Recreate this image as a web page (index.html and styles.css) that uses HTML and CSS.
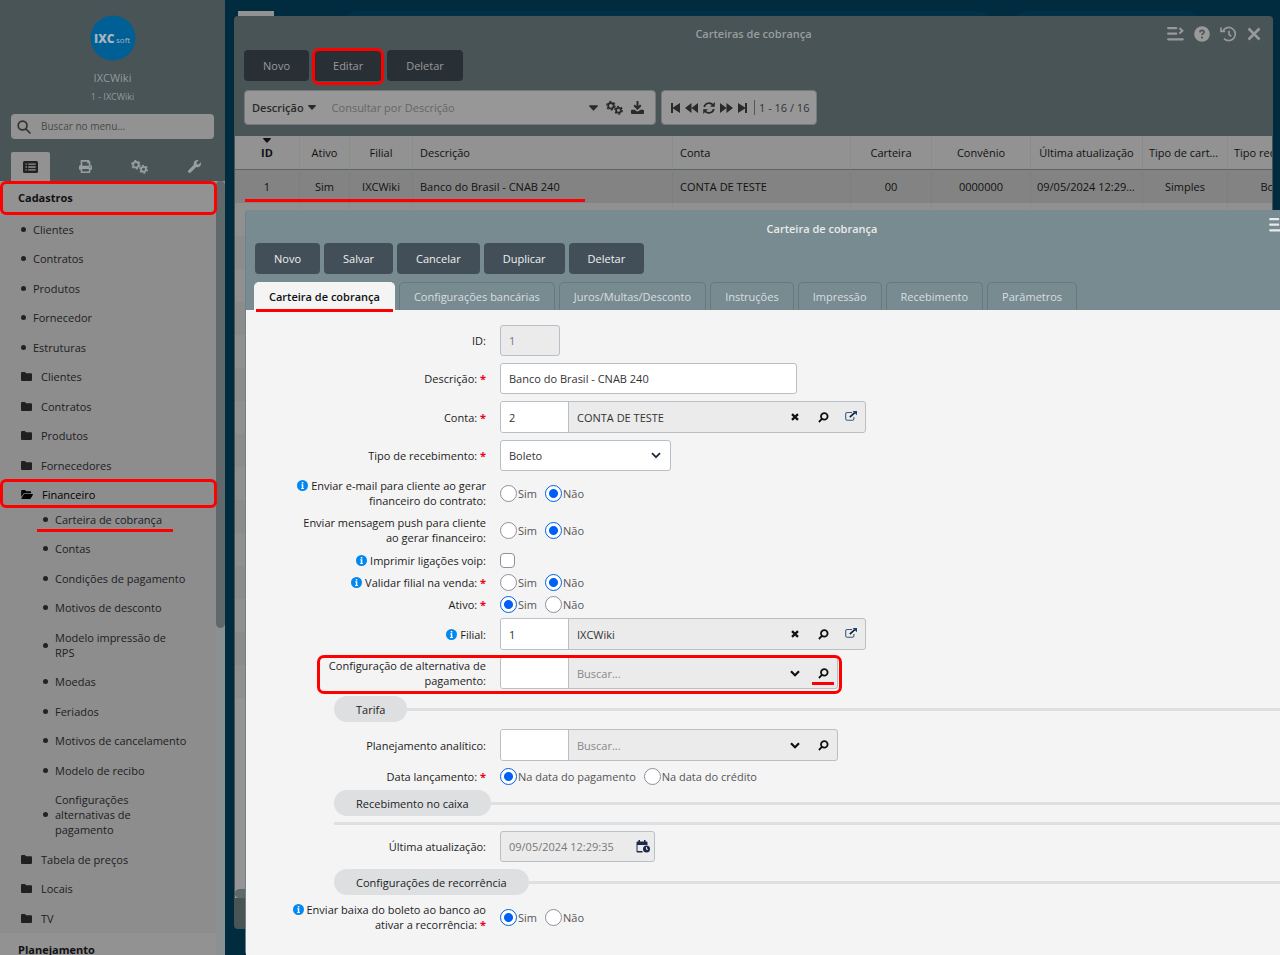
FILE: index.html
```
<!DOCTYPE html>
<html lang="pt-BR">
<head>
<meta charset="utf-8">
<meta name="viewport" content="width=device-width, initial-scale=1">
<title>Carteira de cobrança - IXCWiki</title>
<link rel="stylesheet" href="styles.css">
</head>
<body>
<svg class="sprite" aria-hidden="true">
  <symbol id="i-caret" viewBox="0 0 8 5"><path d="M.6 0h6.8a.6.6 0 0 1 .4 1L4.5 4.6a.7.7 0 0 1-1 0L.2 1A.6.6 0 0 1 .6 0z" fill="currentColor"/></symbol>
  <symbol id="i-cogs" viewBox="0 0 16 13">
    <g fill="none" stroke="currentColor">
      <circle cx="4.6" cy="4.4" r="2.6" stroke-width="1.7"/>
      <circle cx="4.6" cy="4.4" r="3.9" stroke-width="1.3" stroke-dasharray="2.04 2.04"/>
      <circle cx="11.8" cy="8.6" r="2.3" stroke-width="1.7"/>
      <circle cx="11.8" cy="8.6" r="3.5" stroke-width="1.3" stroke-dasharray="1.83 1.83"/>
    </g>
  </symbol>
  <symbol id="i-search" viewBox="0 0 14 14"><path d="M5.6 1.1a4.4 4.4 0 1 0 0 8.8 4.4 4.4 0 0 0 0-8.8zM8.8 8.8l4.2 4.2" fill="none" stroke="currentColor" stroke-width="1.7" stroke-linecap="round"/></symbol>
  <symbol id="i-lens" viewBox="0 0 11 11"><path d="M6.3 1.1a3.3 3.3 0 1 0 0 6.6 3.3 3.3 0 0 0 0-6.6zM3.9 6.9L.9 10" fill="none" stroke="currentColor" stroke-width="1.8"/></symbol>
  <symbol id="i-times" viewBox="0 0 8 8"><path d="M1 1.2l6 5.6M7 1.2L1 6.8" fill="none" stroke="currentColor" stroke-width="2.3"/></symbol>
  <symbol id="i-external" viewBox="0 0 12 10"><path d="M7 1.5H2.3q-1.6 0-1.6 1.6v4.6q0 1.6 1.6 1.6h5q1.6 0 1.6-1.6V6" fill="none" stroke="#3c5a80" stroke-width="1.1"/><path d="M4.8 6.2l5-4.6" stroke="#111c2c" stroke-width="1.6"/><path d="M7.6 0H12v4.2z" fill="#14427c"/></symbol>
  <symbol id="i-chevron" viewBox="0 0 10 7"><path d="M1 1.2l4 4 4-4" fill="none" stroke="currentColor" stroke-width="2.2"/></symbol>
  <symbol id="i-folder" viewBox="0 0 11 9"><path d="M1 0h2.9l1.2 1.3H10a1 1 0 0 1 1 1V8a1 1 0 0 1-1 1H1a1 1 0 0 1-1-1V1a1 1 0 0 1 1-1z" fill="currentColor"/></symbol>
  <symbol id="i-folder-open" viewBox="0 0 12 9"><path d="M.2 7V1a1 1 0 0 1 1-1H4l1.2 1.3h3.9a1 1 0 0 1 1 1v.9H3.7a1.7 1.7 0 0 0-1.5.8zM3.6 4H11.500a.5.5 0 0 1 .4.8L9.700 8.500a1 1 0 0 1-.9.5H.9a.5.5 0 0 1-.4-.8l2.200-3.700a1 1 0 0 1 .9-.5z" fill="currentColor"/></symbol>
  <symbol id="i-info" viewBox="0 0 11 11"><circle cx="5.500" cy="5.500" r="5.500" fill="#0088f0"/><path d="M4.800 1.900h1.500v1.500H4.800zM4.300 4.300h2v3.600h.6v1H4.200v-1h.6V5.300h-.5z" fill="#fff"/></symbol>
  <symbol id="i-menu" viewBox="0 0 17 14"><path d="M1.200 1.200h8M1.200 6.700h8M1.200 12.300h14.600" stroke="currentColor" stroke-width="2.200" stroke-linecap="round"/><path d="M12.400 1l3 2.800-3 2.800" fill="none" stroke="currentColor" stroke-width="2"/></symbol>
</svg>

<div class="desktop">
  <aside class="sidebar">
    <header class="profile">
      <svg class="logo" viewBox="0 0 46 46" role="img" aria-label="IXCsoft">
        <circle cx="23" cy="23" r="22.500" fill="#005f94"/>
        <text x="4" y="28" class="logo-main">IXC</text>
        <text x="26" y="28" class="logo-sub">soft</text>
      </svg>
      <strong class="profile-name">IXCWiki</strong>
      <span class="profile-branch">1 - IXCWiki</span>
      <label class="menu-search">
        <svg width="14" height="14"><use href="#i-search"/></svg>
        <input type="search" placeholder="Buscar no menu..." aria-label="Buscar no menu">
      </label>
      <div class="side-tabs">
        <button class="side-tab active" aria-label="Menu"><svg width="15" height="12" viewBox="0 0 15 12"><rect width="15" height="12" rx="1.500" fill="#222"/><path d="M2.500 3.200h1.300M2.500 6h1.300M2.500 8.800h1.300M5.200 3.200h7.500M5.200 6h7.500M5.200 8.800h7.500" stroke="#929292" stroke-width="1.300"/></svg></button>
        <button class="side-tab" aria-label="Imprimir"><svg width="13" height="13" viewBox="0 0 512 512"><path fill="currentColor" d="M448 192V77.250c0-8.490-3.370-16.620-9.370-22.630L393.370 9.370c-6-6-14.140-9.370-22.630-9.370H96C78.330 0 64 14.330 64 32v160c-35.350 0-64 28.650-64 64v112c0 8.840 7.160 16 16 16h48v96c0 17.670 14.330 32 32 32h320c17.670 0 32-14.330 32-32v-96h48c8.840 0 16-7.160 16-16V256c0-35.350-28.650-64-64-64zm-64 256H128v-96h256v96zm0-224H128V64h192v48c0 8.840 7.160 16 16 16h48v96zm48 72c-13.250 0-24-10.750-24-24 0-13.260 10.750-24 24-24s24 10.740 24 24c0 13.250-10.750 24-24 24z"/></svg></button>
        <button class="side-tab" aria-label="Configurações"><svg width="17" height="14"><use href="#i-cogs"/></svg></button>
        <button class="side-tab" aria-label="Ferramentas"><svg width="13" height="13" viewBox="0 0 512 512"><path fill="currentColor" d="M507.730 109.100c-2.240-9.030-13.540-12.090-20.120-5.510l-74.360 74.360-67.880-11.310-11.310-67.880 74.360-74.360c6.620-6.620 3.430-17.900-5.660-20.160-47.380-11.740-99.550.91-136.580 37.930-39.640 39.640-50.550 97.100-34.050 147.200L18.740 402.760c-24.990 24.990-24.990 65.510 0 90.500 24.990 24.990 65.510 24.990 90.500 0l213.210-213.210c50.120 16.710 107.470 5.680 147.370-34.220 37.070-37.070 49.700-89.320 37.910-136.730z"/></svg></button>
      </div>
    </header>
    <div class="menu-body">
      <nav class="menu">
        <h2 class="menu-heading marked">Cadastros</h2>
        <ul class="menu-list">
          <li><a href="#" class="dot">Clientes</a></li>
          <li><a href="#" class="dot">Contratos</a></li>
          <li><a href="#" class="dot">Produtos</a></li>
          <li><a href="#" class="dot">Fornecedor</a></li>
          <li><a href="#" class="dot">Estruturas</a></li>
          <li><a href="#"><svg width="11" height="9"><use href="#i-folder"/></svg>Clientes</a></li>
          <li><a href="#"><svg width="11" height="9"><use href="#i-folder"/></svg>Contratos</a></li>
          <li><a href="#"><svg width="11" height="9"><use href="#i-folder"/></svg>Produtos</a></li>
          <li><a href="#"><svg width="11" height="9"><use href="#i-folder"/></svg>Fornecedores</a></li>
          <li><a href="#" class="open marked"><svg width="12" height="9"><use href="#i-folder-open"/></svg>Financeiro</a>
            <ul class="submenu">
              <li><a href="#" class="dot underlined">Carteira de cobrança</a></li>
              <li><a href="#" class="dot">Contas</a></li>
              <li><a href="#" class="dot">Condições de pagamento</a></li>
              <li><a href="#" class="dot">Motivos de desconto</a></li>
              <li><a href="#" class="dot wrap">Modelo impressão de RPS</a></li>
              <li><a href="#" class="dot">Moedas</a></li>
              <li><a href="#" class="dot">Feriados</a></li>
              <li><a href="#" class="dot">Motivos de cancelamento</a></li>
              <li><a href="#" class="dot">Modelo de recibo</a></li>
              <li><a href="#" class="dot narrow">Configurações alternativas de pagamento</a></li>
            </ul>
          </li>
          <li><a href="#"><svg width="11" height="9"><use href="#i-folder"/></svg>Tabela de preços</a></li>
          <li><a href="#"><svg width="11" height="9"><use href="#i-folder"/></svg>Locais</a></li>
          <li><a href="#"><svg width="11" height="9"><use href="#i-folder"/></svg>TV</a></li>
        </ul>
        <h2 class="menu-heading">Planejamento</h2>
      </nav>
      <div class="scroll-track"><div class="scroll-thumb"></div></div>
    </div>
  </aside>

  <main class="workspace">
    <div class="taskbar"><span class="task-logo"></span><span class="task-wide"></span><span class="task-short"></span></div>

    <section class="window list-window" aria-label="Carteiras de cobrança">
      <header class="window-head">
        <h1 class="window-title">Carteiras de cobrança</h1>
        <div class="window-actions">
          <button aria-label="Menu"><svg width="17" height="14"><use href="#i-menu"/></svg></button>
          <button aria-label="Ajuda"><svg width="16" height="16" viewBox="0 0 16 16"><circle cx="8" cy="8" r="7.800" fill="currentColor"/><path d="M5.900 6.300q.2-1.900 2.100-1.900t2.100 1.700q0 1-1.200 1.600-.9.500-.9 1.400" fill="none" stroke="#485456" stroke-width="1.700"/><circle cx="8" cy="11.600" r="1.100" fill="#485456"/></svg></button>
          <button aria-label="Histórico"><svg width="17" height="16" viewBox="0 0 17 16"><path d="M3.200 4.400A6.600 6.600 0 1 1 4 12.700M1 1.400v4h4.200M9 4.700v3.700l2.300 2" fill="none" stroke="currentColor" stroke-width="1.700"/></svg></button>
          <button aria-label="Fechar"><svg width="14" height="14" viewBox="0 0 14 14"><path d="M1.500 1.500l11 11M12.500 1.500l-11 11" stroke="currentColor" stroke-width="2.600"/></svg></button>
        </div>
      </header>
      <div class="toolbar">
        <button class="btn">Novo</button>
        <button class="btn marked">Editar</button>
        <button class="btn">Deletar</button>
      </div>
      <div class="filters">
        <div class="query">
          <button class="query-field">Descrição <svg width="8" height="5"><use href="#i-caret"/></svg></button>
          <input type="text" placeholder="Consultar por Descrição" aria-label="Consultar por Descrição">
          <button aria-label="Opções"><svg width="9" height="6"><use href="#i-caret"/></svg></button>
          <button aria-label="Filtros"><svg width="17" height="14"><use href="#i-cogs"/></svg></button>
          <button aria-label="Exportar"><svg width="13" height="13" viewBox="0 0 13 13"><path d="M6.500 0v6.500M3.200 4.200l3.300 3.300 3.300-3.300" fill="none" stroke="currentColor" stroke-width="2"/><path d="M1 8.700h2.800q1.200 1.700 2.700 1.700t2.700-1.700H12a1 1 0 0 1 1 1V12a1 1 0 0 1-1 1H1a1 1 0 0 1-1-1V9.700a1 1 0 0 1 1-1z" fill="currentColor"/></svg></button>
        </div>
        <div class="pager">
          <button aria-label="Primeira"><svg width="9" height="10" viewBox="0 0 9 10"><path d="M0 0h2v4.500L9 0v10L2 5.500V10H0z" fill="currentColor"/></svg></button>
          <button aria-label="Anterior"><svg width="13" height="10" viewBox="0 0 13 10"><path d="M0 5l6.500-5v10zM6.500 5L13 0v10z" fill="currentColor"/></svg></button>
          <button aria-label="Atualizar"><svg width="12" height="12" viewBox="0 0 12 12"><path d="M1.200 5A5 5 0 0 1 10 3M10.800 7A5 5 0 0 1 2 9" fill="none" stroke="currentColor" stroke-width="1.700"/><path d="M11.800 0v4.700H7.100zM.2 12V7.300h4.700z" fill="currentColor"/></svg></button>
          <button aria-label="Próxima"><svg width="13" height="10" viewBox="0 0 13 10"><path d="M13 5L6.500 0v10zM6.500 5L0 0v10z" fill="currentColor"/></svg></button>
          <button aria-label="Última"><svg width="9" height="10" viewBox="0 0 9 10"><path d="M9 0H7v4.500L0 0v10l7-4.500V10h2z" fill="currentColor"/></svg></button>
          <span class="pager-count">1 - 16 / 16</span>
        </div>
      </div>
      <div class="grid-area">
        <table class="grid">
          <colgroup><col class="c-id"><col class="c-ativo"><col class="c-filial"><col class="c-desc"><col class="c-conta"><col class="c-cart"><col class="c-conv"><col class="c-data"><col class="c-tipo"><col class="c-rec"></colgroup>
          <thead><tr><th class="sorted"><svg width="8" height="5"><use href="#i-caret"/></svg>ID</th><th>Ativo</th><th>Filial</th><th class="left">Descrição</th><th class="left">Conta</th><th>Carteira</th><th>Convênio</th><th>Última atualização</th><th>Tipo de carteira</th><th>Tipo recebimento</th></tr></thead>
          <tbody>
            <tr class="selected"><td>1</td><td>Sim</td><td>IXCWiki</td><td class="left">Banco do Brasil - CNAB 240</td><td class="left">CONTA DE TESTE</td><td>00</td><td>0000000</td><td>09/05/2024 12:29:35</td><td>Simples</td><td>Boleto</td></tr>
            <tr><td></td><td></td><td></td><td></td><td></td><td></td><td></td><td></td><td></td><td></td></tr>
            <tr><td></td><td></td><td></td><td></td><td></td><td></td><td></td><td></td><td></td><td></td></tr>
            <tr><td></td><td></td><td></td><td></td><td></td><td></td><td></td><td></td><td></td><td></td></tr>
            <tr><td></td><td></td><td></td><td></td><td></td><td></td><td></td><td></td><td></td><td></td></tr>
            <tr><td></td><td></td><td></td><td></td><td></td><td></td><td></td><td></td><td></td><td></td></tr>
            <tr><td></td><td></td><td></td><td></td><td></td><td></td><td></td><td></td><td></td><td></td></tr>
            <tr><td></td><td></td><td></td><td></td><td></td><td></td><td></td><td></td><td></td><td></td></tr>
            <tr><td></td><td></td><td></td><td></td><td></td><td></td><td></td><td></td><td></td><td></td></tr>
            <tr><td></td><td></td><td></td><td></td><td></td><td></td><td></td><td></td><td></td><td></td></tr>
            <tr><td></td><td></td><td></td><td></td><td></td><td></td><td></td><td></td><td></td><td></td></tr>
            <tr><td></td><td></td><td></td><td></td><td></td><td></td><td></td><td></td><td></td><td></td></tr>
            <tr><td></td><td></td><td></td><td></td><td></td><td></td><td></td><td></td><td></td><td></td></tr>
            <tr><td></td><td></td><td></td><td></td><td></td><td></td><td></td><td></td><td></td><td></td></tr>
            <tr><td></td><td></td><td></td><td></td><td></td><td></td><td></td><td></td><td></td><td></td></tr>
            <tr><td></td><td></td><td></td><td></td><td></td><td></td><td></td><td></td><td></td><td></td></tr>
          </tbody>
        </table>
        <span class="row-underline"></span>
        <div class="grid-scroll"></div>
      </div>
    </section>

    <section class="window form-window" aria-label="Carteira de cobrança">
      <header class="window-head">
        <h1 class="window-title">Carteira de cobrança</h1>
        <div class="window-actions">
          <button aria-label="Menu"><svg width="17" height="14"><use href="#i-menu"/></svg></button>
        </div>
      </header>
      <div class="toolbar">
        <button class="btn">Novo</button>
        <button class="btn">Salvar</button>
        <button class="btn">Cancelar</button>
        <button class="btn">Duplicar</button>
        <button class="btn">Deletar</button>
      </div>
      <div class="tabs" role="tablist">
        <button class="tab active" role="tab" aria-selected="true">Carteira de cobrança</button>
        <button class="tab" role="tab">Configurações bancárias</button>
        <button class="tab" role="tab">Juros/Multas/Desconto</button>
        <button class="tab" role="tab">Instruções</button>
        <button class="tab" role="tab">Impressão</button>
        <button class="tab" role="tab">Recebimento</button>
        <button class="tab" role="tab">Parâmetros</button>
      </div>
      <form class="form">
        <div class="row">
          <label for="id">ID:</label>
          <input class="text text-id" id="id" value="1" disabled>
        </div>
        <div class="row">
          <label for="descricao">Descrição: <b>*</b></label>
          <input class="text text-desc" id="descricao" value="Banco do Brasil - CNAB 240">
        </div>
        <div class="row">
          <label for="conta">Conta: <b>*</b></label>
          <div class="lookup">
            <input class="code" id="conta" value="2">
            <input class="name" value="CONTA DE TESTE" aria-label="Nome da conta" readonly>
            <button type="button" aria-label="Limpar"><svg width="8" height="8"><use href="#i-times"/></svg></button>
            <button type="button" aria-label="Buscar"><svg width="11" height="11"><use href="#i-lens"/></svg></button>
            <button type="button" class="up" aria-label="Abrir"><svg width="12" height="10"><use href="#i-external"/></svg></button>
          </div>
        </div>
        <div class="row">
          <label for="tipo">Tipo de recebimento: <b>*</b></label>
          <div class="select"><select id="tipo"><option>Boleto</option></select><svg width="10" height="7" viewBox="0 0 10 7"><path d="M1 1.200l4 4 4-4" fill="none" stroke="#222c3c" stroke-width="1.800"/></svg></div>
        </div>
        <div class="row">
          <span class="label" id="l-email"><svg class="info" width="11" height="11"><use href="#i-info"/></svg>Enviar e-mail para cliente ao gerar financeiro do contrato:</span>
          <div class="radios" role="radiogroup" aria-labelledby="l-email"><label><input type="radio" name="email">Sim</label><label><input type="radio" name="email" checked>Não</label></div>
        </div>
        <div class="row">
          <span class="label" id="l-push">Enviar mensagem push para cliente ao gerar financeiro:</span>
          <div class="radios" role="radiogroup" aria-labelledby="l-push"><label><input type="radio" name="push">Sim</label><label><input type="radio" name="push" checked>Não</label></div>
        </div>
        <div class="row compact">
          <label for="voip"><svg class="info" width="11" height="11"><use href="#i-info"/></svg>Imprimir ligações voip:</label>
          <input type="checkbox" id="voip">
        </div>
        <div class="row compact">
          <span class="label" id="l-validar"><svg class="info" width="11" height="11"><use href="#i-info"/></svg>Validar filial na venda: <b>*</b></span>
          <div class="radios" role="radiogroup" aria-labelledby="l-validar"><label><input type="radio" name="validar">Sim</label><label><input type="radio" name="validar" checked>Não</label></div>
        </div>
        <div class="row compact">
          <span class="label" id="l-ativo">Ativo: <b>*</b></span>
          <div class="radios" role="radiogroup" aria-labelledby="l-ativo"><label><input type="radio" name="ativo" checked>Sim</label><label><input type="radio" name="ativo">Não</label></div>
        </div>
        <div class="row">
          <label for="filial"><svg class="info" width="11" height="11"><use href="#i-info"/></svg>Filial:</label>
          <div class="lookup">
            <input class="code" id="filial" value="1">
            <input class="name" value="IXCWiki" aria-label="Nome da filial" readonly>
            <button type="button" aria-label="Limpar"><svg width="8" height="8"><use href="#i-times"/></svg></button>
            <button type="button" aria-label="Buscar"><svg width="11" height="11"><use href="#i-lens"/></svg></button>
            <button type="button" class="up" aria-label="Abrir"><svg width="12" height="10"><use href="#i-external"/></svg></button>
          </div>
        </div>
        <div class="row marked-row">
          <label for="config">Configuração de alternativa de pagamento:</label>
          <div class="lookup">
            <input class="code" id="config">
            <input class="name" placeholder="Buscar..." aria-label="Buscar configuração">
            <button type="button" aria-label="Expandir"><svg width="10" height="7"><use href="#i-chevron"/></svg></button>
            <button type="button" class="underlined" aria-label="Buscar"><svg width="11" height="11"><use href="#i-lens"/></svg></button>
          </div>
        </div>
        <h2 class="divider"><span>Tarifa</span></h2>
        <div class="row">
          <label for="plan">Planejamento analítico:</label>
          <div class="lookup">
            <input class="code" id="plan">
            <input class="name" placeholder="Buscar..." aria-label="Buscar planejamento">
            <button type="button" aria-label="Expandir"><svg width="10" height="7"><use href="#i-chevron"/></svg></button>
            <button type="button" aria-label="Buscar"><svg width="11" height="11"><use href="#i-lens"/></svg></button>
          </div>
        </div>
        <div class="row compact">
          <span class="label" id="l-data">Data lançamento: <b>*</b></span>
          <div class="radios" role="radiogroup" aria-labelledby="l-data"><label><input type="radio" name="data" checked>Na data do pagamento</label><label><input type="radio" name="data">Na data do crédito</label></div>
        </div>
        <h2 class="divider"><span>Recebimento no caixa</span></h2>
        <hr class="rule">
        <div class="row">
          <label for="ultima">Última atualização:</label>
          <div class="date">
            <input id="ultima" value="09/05/2024 12:29:35" disabled>
            <svg width="14" height="13" viewBox="0 0 14 13"><path d="M1.500 1.500h9a1 1 0 0 1 1 1V5h-10v6h5v1.500H1.500a1 1 0 0 1-1-1v-9a1 1 0 0 1 1-1zM2.500 0H4v2H2.500zM8 0h1.500v2H8z" fill="#1e2a4d"/><circle cx="10.500" cy="9" r="3.500" fill="#1e2a4d"/><path d="M10.500 7v2.300H12" fill="none" stroke="#ebebeb"/></svg>
          </div>
        </div>
        <h2 class="divider"><span>Configurações de recorrência</span></h2>
        <div class="row">
          <span class="label" id="l-baixa"><svg class="info" width="11" height="11"><use href="#i-info"/></svg>Enviar baixa do boleto ao banco ao ativar a recorrência: <b>*</b></span>
          <div class="radios" role="radiogroup" aria-labelledby="l-baixa"><label><input type="radio" name="baixa" checked>Sim</label><label><input type="radio" name="baixa">Não</label></div>
        </div>
      </form>
    </section>
  </main>
</div>
</body>
</html>
```
FILE: styles.css
```
*, *::before, *::after { box-sizing: border-box; }
body {
  margin: 0;
  font: 11px/15px "Open Sans", "Noto Sans", sans-serif;
  color: #1c1c1c;
  background: #012b3f;
  overflow: hidden;
}
button, input, select { font: inherit; color: inherit; margin: 0; }
button { border: 0; padding: 0; background: none; }
h1, h2 { margin: 0; font-size: 11px; line-height: 15px; }
ul { list-style: none; margin: 0; padding: 0; }
a { color: inherit; text-decoration: none; }
svg { display: block; flex: none; }
.sprite { position: absolute; width: 0; height: 0; }
.desktop { display: flex; height: 100vh; }

/* Sidebar */
.sidebar { width: 225px; flex: none; display: flex; flex-direction: column; background: #485456; color: #929a9c; }
.profile { display: flex; flex-direction: column; align-items: center; padding-top: 15px; flex: none; }
.logo { width: 46px; height: 46px; }
.logo-main { font: 800 12px "Open Sans", sans-serif; fill: #a5b4be; }
.logo-sub { font: 400 8px "Open Sans", sans-serif; fill: #a5b4be; }
.profile-name { font-weight: 400; margin-top: 9px; }
.profile-branch { font-size: 9px; margin-top: 4px; }
.menu-search {
  align-self: stretch; display: flex; align-items: center; gap: 8px;
  margin: 10px 11px 13px; padding: 0 6px; height: 25px;
  background: #929292; border-radius: 4px; color: #333;
}
.menu-search input { flex: 1; min-width: 0; border: 0; background: none; font-size: 10px; outline: 0; }
.menu-search input::placeholder { color: #484848; opacity: 1; }
.side-tabs { align-self: stretch; display: grid; grid-template-columns: repeat(4, 1fr); padding: 0 3px; justify-items: center; }
.side-tab { width: 39px; height: 29px; display: grid; place-items: center; color: #999e9f; }
.side-tab.active { background: #929292; border-radius: 2px 2px 0 0; }
.menu-body { flex: 1; min-height: 0; display: flex; overflow: hidden; background: #8d8d8d; }
.menu { flex: 1; color: #202023; }
.menu-heading { height: 34px; padding: 9px 18px; background: #929292; color: #111; position: relative; }
.menu-list a { display: flex; align-items: center; padding: 7px 22px 7px 21px; gap: 9px; position: relative; }
.menu-list li:nth-child(even) > a { padding-bottom: 8px; }
.menu-list a.dot { gap: 7px; }
.dot::before { content: ""; width: 5px; height: 5px; border-radius: 50%; background: #222; flex: none; }
.menu-list a.open { color: #000; }
.menu-list .submenu { margin-top: -5px; }
.menu-list .submenu a { padding-left: 43px; }
.menu-list .submenu a.wrap { padding-right: 42px; }
.menu-list .submenu a.narrow { padding-right: 64px; }
.menu-list a.underlined::after { content: ""; position: absolute; left: 37px; right: 43px; bottom: 2px; height: 3px; background: #f00; }
.menu .marked::after { content: ""; position: absolute; inset: 0 -1px 0 0; border: 3px solid #f00; border-radius: 6px; }
.menu .open.marked::after { inset: -1px -1px 2px 0; }
.scroll-track { width: 9px; background: #8a9193; }
.scroll-thumb { height: 447px; background: #5f686a; border-radius: 5px; }

/* Workspace and windows */
.workspace { flex: 1; position: relative; min-width: 0; overflow: hidden; }
.taskbar { display: flex; padding: 11px 80px 0 13px; }
.taskbar span { height: 24px; }
.task-logo { width: 36px; background: #929292; }
.task-wide { flex: 7; margin: 0 24px 0 70px; background: #023047; border-radius: 12px; }
.task-short { flex: 2; background: #023047; border-radius: 12px; }
.window { position: absolute; display: flex; flex-direction: column; border-radius: 4px; }
.window-head { position: relative; display: flex; justify-content: center; align-items: center; height: 36px; flex: none; }
.window-title { font-weight: 600; }
.window-actions { position: absolute; right: 12px; top: 9px; display: flex; align-items: center; gap: 11px; }
.toolbar { display: flex; gap: 4px; padding: 0 9px; }
.btn { height: 31px; padding: 0 19px; border-radius: 4px; position: relative; }

.list-window { inset: 16px 7px 26px 9px; padding: 0 1px 31px; background: #485456; color: #111; }
.list-window .window-head { height: 34px; }
.list-window .window-title { color: #999e9f; }
.list-window .window-actions { color: #999; right: 11px; top: 10px; gap: 10px; }
.list-window .toolbar { gap: 5px; }
.list-window .btn { background: #282f35; color: #989a9c; }
.btn.marked::after { content: ""; position: absolute; inset: -2px -2px -4px; border: 3px solid #f00; border-radius: 7px; }
.filters { display: flex; gap: 5px; padding: 9px 9px 11px; }
.query, .pager { display: flex; align-items: center; height: 35px; background: #979797; border: 1px solid #76797c; border-radius: 4px; color: #2a2a2a; }
.query { width: 412px; padding: 0 11px 0 7px; gap: 8px; }
.query input { flex: 1; min-width: 0; border: 0; background: none; outline: 0; padding: 0 8px; }
.query input::placeholder { color: #666; opacity: 1; }
.query-field { display: flex; align-items: center; gap: 4px; font-weight: 600; }
.pager { padding: 0 7px 0 9px; gap: 5px; }
.pager-count { border-left: 1px solid #555; margin-left: 2px; padding-left: 4px; color: #333; }
.grid-area { flex: 1; min-height: 0; position: relative; overflow: hidden; background: #959595; }
.grid { table-layout: fixed; width: 1092px; border-collapse: separate; border-spacing: 0; }
.c-id { width: 65px; } .c-ativo { width: 50px; } .c-filial { width: 63px; } .c-desc { width: 260px; }
.c-conta { width: 178px; } .c-cart { width: 81px; } .c-conv { width: 99px; } .c-data { width: 112px; }
.c-tipo { width: 85px; } .c-rec { width: 99px; }
.grid th, .grid td { padding: 0 6px; text-align: center; font-weight: 400; overflow: hidden; text-overflow: ellipsis; white-space: nowrap; border-right: 1px solid #898b8c; }
.grid th { height: 34px; background: #929292; border-bottom: 1px solid #596466; }
.grid td { height: 33px; background: #8c8c8c; }
.grid tr:nth-child(even) td { background: #909090; }
.grid tr.selected td { background: #838383; border-right-color: #7e7e7e; }
.grid .left { text-align: left; padding-left: 7px; }
.grid .sorted { font-weight: 700; position: relative; }
.sorted svg { position: absolute; top: 2px; left: 28px; }
.row-underline { position: absolute; left: 10px; top: 63px; width: 340px; height: 3px; background: #f00; }
.grid-scroll { position: absolute; left: 0; right: 0; bottom: 0; height: 9px; border-radius: 5px; background: #5f686a; }

.form-window { inset: 210px -118px 0 20px; border-left: 1px solid #6f8287; background: #788b90; color: #e8eaeb; }
.form-window .window-head { height: 33px; padding-top: 4px; }
.form-window .btn { background: #424f59; color: #f0f0f0; }
.form-window .window-actions { right: 112px; top: 8px; }
.tabs { display: flex; gap: 4px; padding: 8px 8px 0; }
.tab { height: 28px; padding: 0 14px; border: 1px solid #66797d; border-bottom: 0; border-radius: 5px 5px 0 0; color: #d9dee0; }
.tab.active { background: #f4f4f4; border-color: #f4f4f4; color: #111; font-weight: 600; position: relative; }
.tab.active::after { content: ""; position: absolute; left: 1px; right: 1px; bottom: -2px; height: 3px; background: #f00; }

/* Form */
.form { flex: 1; min-height: 0; background: #f4f4f4; color: #1c1c1c; padding: 12px 0 0 44px; }
.row { display: grid; grid-template-columns: 196px 1fr; column-gap: 14px; align-items: center; justify-items: start; padding: 3px 0 4px; position: relative; }
.row.compact { padding: 0; height: 22px; }
.row > label, .label { justify-self: end; text-align: right; }
.label b, .row label b { color: #f00020; }
.info { display: inline-block; vertical-align: -1px; margin-right: 3px; }
.text, .select, .date { height: 31px; border: 1px solid #b9bfc6; border-radius: 3px; background: #fff; padding: 0 8px; color: #333; }
.text-id { width: 60px; }
.text-desc { width: 297px; }
.text:disabled, .date { background: #ebebeb; color: #777; }
.select { width: 171px; display: flex; align-items: center; position: relative; padding: 0; }
.select select { appearance: none; border: 0; background: none; width: 100%; height: 100%; padding: 0 8px; }
.select svg { position: absolute; right: 9px; pointer-events: none; }
.date { width: 155px; display: flex; align-items: center; padding-right: 4px; }
.date input { flex: 1; min-width: 0; border: 0; background: none; padding: 0; color: #777; }
.lookup { display: flex; height: 32px; border: 1px solid #b9bfc6; border-radius: 3px; background: #ebebeb; overflow: hidden; color: #333; }
.lookup .code { width: 68px; border: 0; border-right: 1px solid #b9bfc6; padding: 0 8px; background: #fff; }
.lookup .name { width: 212px; border: 0; padding: 0 8px; background: none; }
.lookup .name::placeholder { color: #888; opacity: 1; }
.lookup button { width: 28px; display: grid; place-items: center; color: #111; position: relative; }
.lookup .up { padding-bottom: 3px; }
.lookup .underlined::after { content: ""; position: absolute; left: 3px; right: 3px; bottom: 3px; height: 3px; background: #f00; }
.marked-row::after { content: ""; position: absolute; left: 27px; top: 1px; bottom: -1px; width: 525px; border: 3px solid #f00; border-radius: 7px; pointer-events: none; }
.radios { display: flex; gap: 8px; color: #555; }
.radios label { display: flex; align-items: center; gap: 1px; }
input[type="radio"], input[type="checkbox"] { appearance: none; width: 17px; height: 17px; border: 1px solid #8f8f9d; border-radius: 50%; background: #fff; flex: none; }
input[type="checkbox"] { width: 15px; height: 15px; border-radius: 4px; }
input[type="radio"]:checked { border-color: #0060df; background: radial-gradient(circle, #0060f5 4px, #fff 5px); }
.divider { display: flex; align-items: center; margin-left: 44px; padding: 3px 0 4px; font-weight: 500; }
.divider span { background: #dddfe1; border-radius: 13px; padding: 6px 22px 5px; }
.divider::after { content: ""; flex: 1; height: 3px; background: #dddfe1; }
.rule { height: 3px; border: 0; margin: 2px 0 3px 44px; background: #dddfe1; }
```
